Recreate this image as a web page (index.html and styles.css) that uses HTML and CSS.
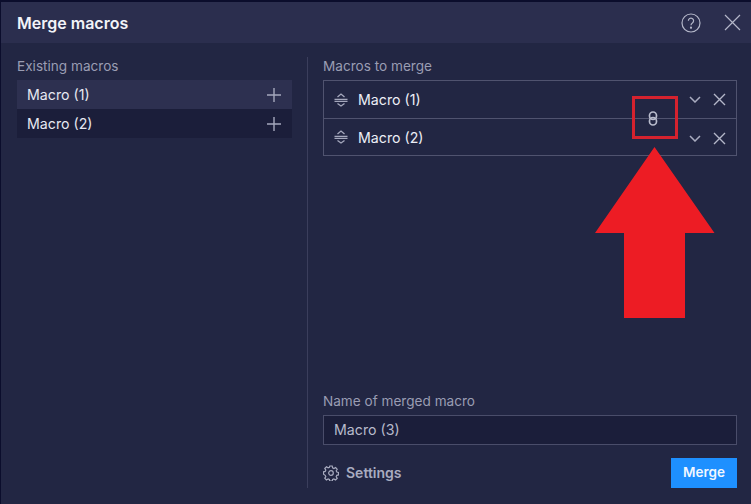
FILE: index.html
```html
<!DOCTYPE html>
<html lang="en">
<head>
<meta charset="utf-8">
<title>Merge macros</title>
<link rel="stylesheet" href="styles.css">
</head>
<body>
<div class="dialog">
  <header class="head">
    <h1 class="title">Merge macros</h1>
    <div class="head-icons">
      <svg width="20" height="20" viewBox="0 0 20 20" fill="none" stroke="#b4b7c9" stroke-width="1.200"><circle cx="10" cy="10" r="9"/><path d="M7.400 7.800a2.600 2.600 0 1 1 4 2.100c-1 .7-1.400 1.100-1.400 2.300"/><circle cx="10" cy="14.700" r=".5" fill="#b4b7c9"/></svg>
      <svg width="17" height="17" viewBox="0 0 17 17" fill="none" stroke="#b4b7c9" stroke-width="1.200"><path d="M1 1l15 15M16 1L1 16"/></svg>
    </div>
  </header>
  <main class="body">
    <section class="left">
      <div class="label">Existing macros</div>
      <div class="list">
        <div class="item item-hover"><span>Macro (1)</span><svg width="14" height="14" viewBox="0 0 14 14" stroke="#a5a8bd" stroke-width="1.400"><path d="M7 0v14M0 7h14"/></svg></div>
        <div class="item item-dark"><span>Macro (2)</span><svg width="14" height="14" viewBox="0 0 14 14" stroke="#a5a8bd" stroke-width="1.400"><path d="M7 0v14M0 7h14"/></svg></div>
      </div>
    </section>
    <section class="right">
      <div class="label">Macros to merge</div>
      <div class="merge-box">
        <div class="merge-row">
          <svg class="drag" width="14" height="14" viewBox="0 0 14 14" fill="none" stroke="#a5a8bd" stroke-width="1.300"><path d="M3.500 4L7 1l3.500 3M0.500 6.300h13M0.500 8.300h13M3.500 10.500L7 13l3.500-2.500"/></svg>
          <span class="merge-name">Macro (1)</span>
          <svg class="chev" width="12" height="7" viewBox="0 0 12 7" fill="none" stroke="#a9acc0" stroke-width="1.500"><path d="M1 1l5 5 5-5"/></svg>
          <svg class="x" width="13" height="13" viewBox="0 0 13 13" fill="none" stroke="#b4b7c9" stroke-width="1.400"><path d="M1 1l11 11M12 1L1 12"/></svg>
        </div>
        <div class="merge-row merge-row-last">
          <svg class="drag" width="14" height="14" viewBox="0 0 14 14" fill="none" stroke="#a5a8bd" stroke-width="1.300"><path d="M3.500 4L7 1l3.500 3M0.500 6.300h13M0.500 8.300h13M3.500 10.500L7 13l3.500-2.500"/></svg>
          <span class="merge-name">Macro (2)</span>
          <svg class="chev chev-low" width="12" height="7" viewBox="0 0 12 7" fill="none" stroke="#a9acc0" stroke-width="1.500"><path d="M1 1l5 5 5-5"/></svg>
          <svg class="x x-low" width="13" height="13" viewBox="0 0 13 13" fill="none" stroke="#b4b7c9" stroke-width="1.400"><path d="M1 1l11 11M12 1L1 12"/></svg>
        </div>
        <svg class="link" width="10" height="15" viewBox="0 0 10 15" fill="none" stroke="#b9bccd" stroke-width="1.700"><rect x="1.500" y="1" width="7" height="7.500" rx="3.500"/><rect x="1.500" y="6.500" width="7" height="7.500" rx="3.500"/></svg>
      </div>
      <div class="name-block">
        <div class="label">Name of merged macro</div>
        <div class="input">Macro (3)</div>
      </div>
      <div class="foot">
        <div class="settings">
          <svg width="16" height="16" viewBox="0 0 16 16" fill="none" stroke="#a9acc0" stroke-width="1.200"><circle cx="8" cy="8" r="2.300"/><path d="M6.800 1h2.400l.4 1.900 1.300.6 1.700-1 1.600 1.700-1 1.600.6 1.300 1.700.4v2.400l-1.700.4-.6 1.300 1 1.700-1.700 1.600-1.600-1-1.300.6-.4 1.700H6.800l-.4-1.700-1.300-.6-1.700 1-1.600-1.700 1-1.600-.6-1.300L.5 9.200V6.800l1.700-.4.600-1.300-1-1.700 1.700-1.600 1.600 1 1.300-.6z"/></svg>
          <span class="settings-text">Settings</span>
        </div>
        <button class="merge-btn">Merge</button>
      </div>
    </section>
  </main>
</div>
<div class="callout-box"></div>
<svg class="callout-arrow" width="120" height="172" viewBox="0 0 120 172"><path fill="#ed1c24" d="M59.500 0L119.500 86H90V171H29V86H0z"/></svg>
</body>
</html>
```

FILE: styles.css
```css
* { box-sizing: border-box; }
html, body { margin: 0; padding: 0; }
body {
  width: 751px;
  height: 504px;
  overflow: hidden;
  background: #0b0d2c;
  font-family: Inter, "Noto Sans", sans-serif;
  color: #eceef6;
  position: relative;
  padding: 2px 0 0 1px;
}
.dialog {
  height: 502px;
  background: #222643;
  display: flex;
  flex-direction: column;
}
.head {
  height: 41px;
  flex: none;
  background: #2b2e4e;
  display: flex;
  align-items: center;
  justify-content: space-between;
  padding: 0 10px 0 16px;
}
.title {
  margin: 0;
  font-size: 16px;
  font-weight: 600;
  color: #f2f3f8;
}
.head-icons { display: flex; align-items: center; gap: 23px; }
.head-icons svg { display: block; }
.body {
  flex: 1;
  display: flex;
  padding: 14px 14px 16px 16px;
}
.left {
  width: 291px;
  flex: none;
  padding-right: 15px;
  border-right: 1px solid #3b3e5c;
}
.label {
  font-size: 13.600px;
  line-height: 18px;
  color: #9a9db3;
  height: 23px;
}
.list { display: flex; flex-direction: column; }
.item {
  height: 29px;
  display: flex;
  align-items: center;
  justify-content: space-between;
  padding: 0 11px 0 10px;
  font-size: 14.200px;
  color: #e6e8f1;
}
.item-hover { background: #2d3050; }
.item-dark { background: #1b1e3a; }
.right {
  flex: 1;
  min-width: 0;
  padding-left: 15px;
  display: flex;
  flex-direction: column;
}
.merge-box {
  position: relative;
  border: 1px solid #50536f;
  height: 76px;
}
.merge-row {
  height: 38px;
  display: flex;
  align-items: center;
  padding: 0 10px;
  font-size: 14.200px;
  border-bottom: 1px solid #50536f;
}
.merge-row-last { height: 36px; border-bottom: 0; }
.merge-name { flex: 1; margin-left: 10px; color: #eceef6; }
.drag { flex: none; }
.chev { flex: none; margin-right: 12px; }
.x { flex: none; }
.chev-low, .x-low { transform: translateY(1px); }
.link { position: absolute; left: 324px; top: 30px; }
.name-block { margin-top: auto; }
.input {
  height: 30px;
  border: 1px solid #4a4d6a;
  background: #1b1e3a;
  font-size: 14.200px;
  line-height: 28px;
  padding-left: 10px;
  color: #b7bacb;
}
.foot {
  margin-top: 13px;
  display: flex;
  justify-content: space-between;
  align-items: center;
}
.settings {
  display: flex;
  align-items: center;
  gap: 7px;
  font-size: 14px;
  font-weight: 600;
  color: #a9acc0;
}
.settings-text { padding-bottom: 2px; }
.merge-btn {
  width: 66px;
  height: 30px;
  border: 0;
  background: #1e90ff;
  color: #f2f7ff;
  font-family: inherit;
  font-size: 13.500px;
  font-weight: 600;
  padding: 0 0 2px;
}
.callout-box {
  position: absolute;
  left: 632px;
  top: 96px;
  width: 46px;
  height: 43px;
  border: 3px solid #d5222e;
}
.callout-arrow {
  position: absolute;
  left: 595px;
  top: 147px;
  display: block;
}
```
